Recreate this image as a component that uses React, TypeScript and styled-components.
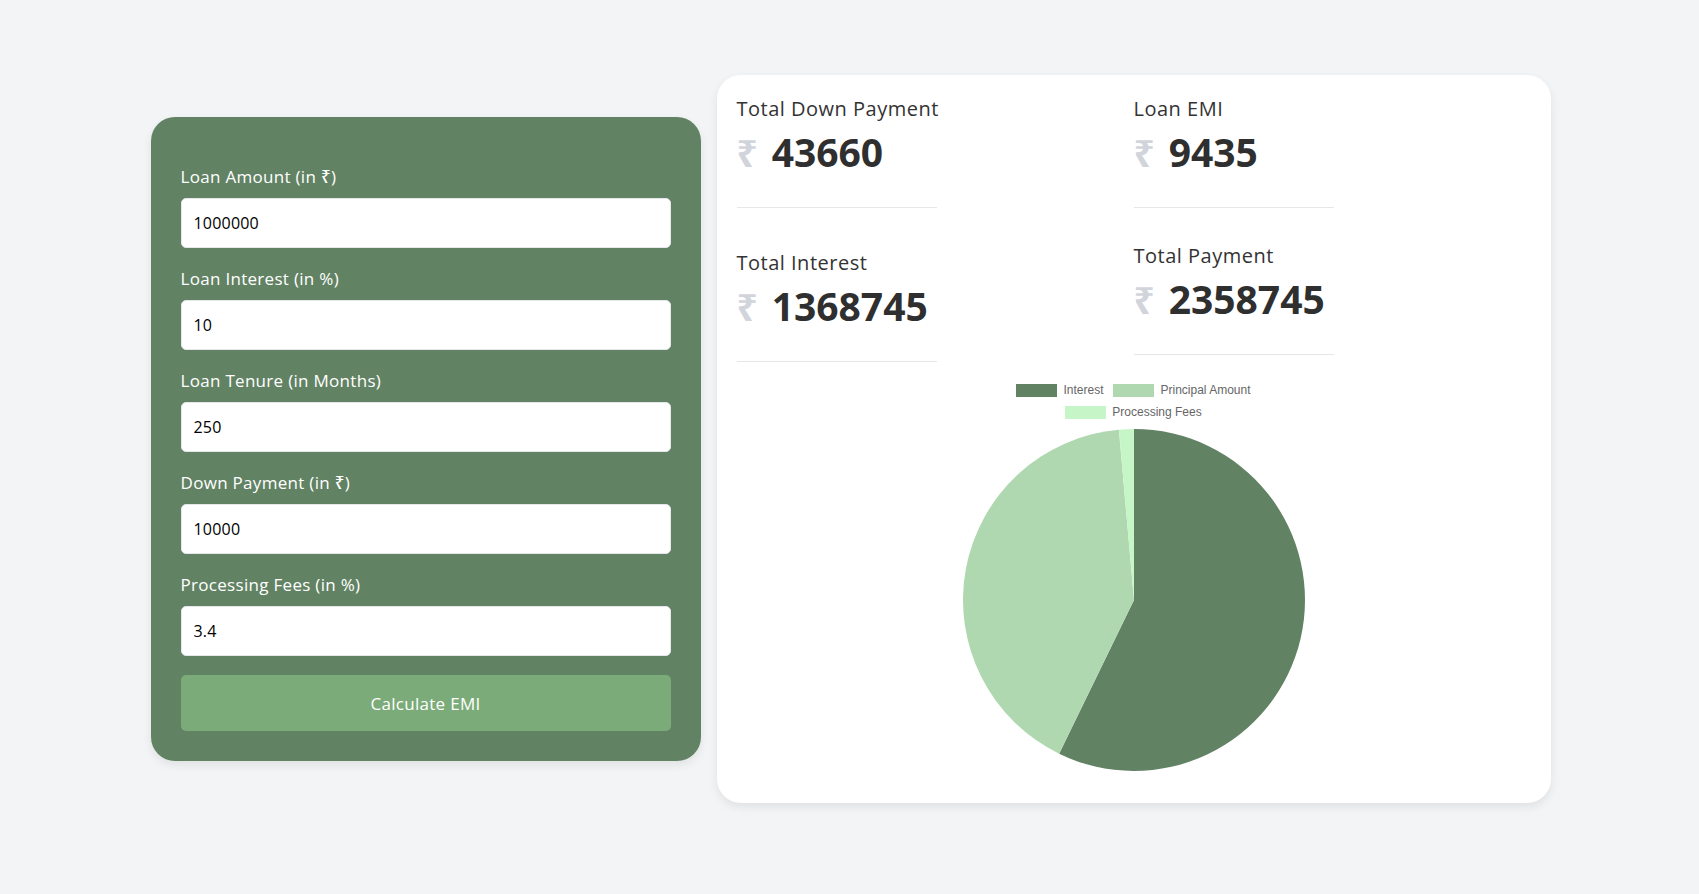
import styled, { createGlobalStyle } from 'styled-components';

const GlobalStyle = createGlobalStyle`
  * { box-sizing: border-box; }
  body {
    margin: 0;
    background: #f3f4f6;
    font-family: "Open Sans", "Noto Sans", sans-serif;
    color: #333;
  }
`;

const fields = [
  { label: 'Loan Amount (in ₹)', value: '1000000' },
  { label: 'Loan Interest (in %)', value: '10' },
  { label: 'Loan Tenure (in Months)', value: '250' },
  { label: 'Down Payment (in ₹)', value: '10000' },
  { label: 'Processing Fees (in %)', value: '3.4' },
];

const slices = [
  { name: 'Interest', value: 1368745, color: '#628264' },
  { name: 'Principal Amount', value: 990000, color: '#b0d8b0' },
  { name: 'Processing Fees', value: 33660, color: '#c6f6c8' },
];

function arcPath(cx: number, cy: number, r: number, a0: number, a1: number) {
  const rad = (d: number) => (d * Math.PI) / 180;
  const x0 = cx + r * Math.cos(rad(a0));
  const y0 = cy + r * Math.sin(rad(a0));
  const x1 = cx + r * Math.cos(rad(a1));
  const y1 = cy + r * Math.sin(rad(a1));
  const large = a1 - a0 > 180 ? 1 : 0;
  return `M ${cx} ${cy} L ${x0} ${y0} A ${r} ${r} 0 ${large} 1 ${x1} ${y1} Z`;
}

function Pie() {
  const total = slices.reduce((s, x) => s + x.value, 0);
  let angle = -90;
  return (
    <svg width="342" height="342" viewBox="0 0 342 342">
      {slices.map((s) => {
        const a0 = angle;
        const a1 = angle + (s.value / total) * 360;
        angle = a1;
        return <path key={s.name} d={arcPath(171, 171, 171, a0, a1)} fill={s.color} />;
      })}
    </svg>
  );
}

function Stat({ title, value, gapTop }: { title: string; value: string; gapTop?: number }) {
  return (
    <StatItem $gapTop={gapTop ?? 0}>
      <StatTitle>{title}</StatTitle>
      <StatValue>
        <Rupee>₹</Rupee>
        {value}
      </StatValue>
    </StatItem>
  );
}

export default function App() {
  return (
    <>
      <GlobalStyle />
      <Page>
        <Layout>
          <FormCard>
            {fields.map((f) => (
              <Field key={f.label}>
                <Label>{f.label}</Label>
                <Input defaultValue={f.value} />
              </Field>
            ))}
            <Button>Calculate EMI</Button>
          </FormCard>

          <ResultCard>
            <StatsGrid>
              <StatColumn>
                <Stat title="Total Down Payment" value="43660" />
                <Stat title="Total Interest" value="1368745" gapTop={38} />
              </StatColumn>
              <StatColumn>
                <Stat title="Loan EMI" value="9435" />
                <Stat title="Total Payment" value="2358745" gapTop={31} />
              </StatColumn>
            </StatsGrid>

            <ChartBox>
              <Legend>
                {slices.map((s) => (
                  <LegendItem key={s.name}>
                    <Swatch $color={s.color} />
                    {s.name}
                  </LegendItem>
                ))}
              </Legend>
              <Pie />
            </ChartBox>
          </ResultCard>
        </Layout>
      </Page>
    </>
  );
}

//*STYLES
const Page = styled.main`
  min-height: 100vh;
  display: flex;
  align-items: center;
  justify-content: center;
  padding-bottom: 16px;
`;

const Layout = styled.div`
  width: 1400px;
  margin-left: 2px;
  display: flex;
  align-items: center;
  gap: 16px;
`;

const FormCard = styled.section`
  width: 550px;
  flex-shrink: 0;
  background: #628264;
  border-radius: 24px;
  padding: 48px 30px 30px;
  box-shadow: 0 4px 10px rgba(0, 0, 0, 0.08);
`;

const Field = styled.div`
  display: flex;
  flex-direction: column;
  margin-bottom: 19px;
`;

const Label = styled.label`
  color: #fff;
  font-size: 17px;
  font-weight: 500;
  line-height: 24px;
  letter-spacing: 0.3px;
  margin-bottom: 9px;
`;

const Input = styled.input`
  height: 50px;
  width: 100%;
  border: 1px solid #e5e7eb;
  border-radius: 5px;
  background: #fff;
  padding: 0 12px;
  font-family: inherit;
  font-size: 16px;
  letter-spacing: 0.2px;
  color: #000;
  outline: none;
`;

const Button = styled.button`
  display: block;
  width: 100%;
  height: 56px;
  margin-top: 1px;
  border: none;
  border-radius: 5px;
  background: #7aab78;
  color: #fff;
  font-family: inherit;
  font-size: 17px;
  font-weight: 500;
  letter-spacing: 0.3px;
  cursor: pointer;
`;

const ResultCard = styled.section`
  width: 834px;
  flex-shrink: 0;
  background: #fff;
  border-radius: 24px;
  padding: 17px 20px 32px;
  box-shadow: 0 4px 10px rgba(0, 0, 0, 0.08);
`;

const StatsGrid = styled.div`
  display: grid;
  grid-template-columns: 1fr 1fr;
  align-items: start;
`;

const StatColumn = styled.div`
  display: flex;
  flex-direction: column;
`;

const StatItem = styled.div<{ $gapTop: number }>`
  width: 200px;
  margin-top: ${(p) => p.$gapTop}px;
  padding-bottom: 27px;
  border-bottom: 1px solid #e5e7eb;
`;

const StatTitle = styled.h3`
  margin: 0;
  font-size: 20px;
  font-weight: 400;
  line-height: 33px;
  letter-spacing: 0.5px;
  white-space: nowrap;
  color: #333;
`;

const StatValue = styled.div`
  display: flex;
  align-items: baseline;
  font-size: 39px;
  font-weight: 700;
  line-height: 54px;
  white-space: nowrap;
  color: #2f2f2f;
`;

const Rupee = styled.span`
  font-size: 37px;
  color: #d1d5db;
  margin-right: 14px;
`;

const ChartBox = styled.div`
  display: flex;
  flex-direction: column;
  align-items: center;
  margin-top: 17px;
`;

const Legend = styled.div`
  display: flex;
  flex-wrap: wrap;
  justify-content: center;
  max-width: 300px;
  margin-bottom: 6px;
  font-family: "Liberation Sans", Arial, sans-serif;
  font-size: 12px;
  color: #666;
`;

const LegendItem = styled.div`
  display: flex;
  align-items: center;
  height: 22px;
  gap: 6px;
  margin: 0 5px;
`;

const Swatch = styled.span<{ $color: string }>`
  width: 41px;
  height: 13px;
  background: ${(p) => p.$color};
`;
